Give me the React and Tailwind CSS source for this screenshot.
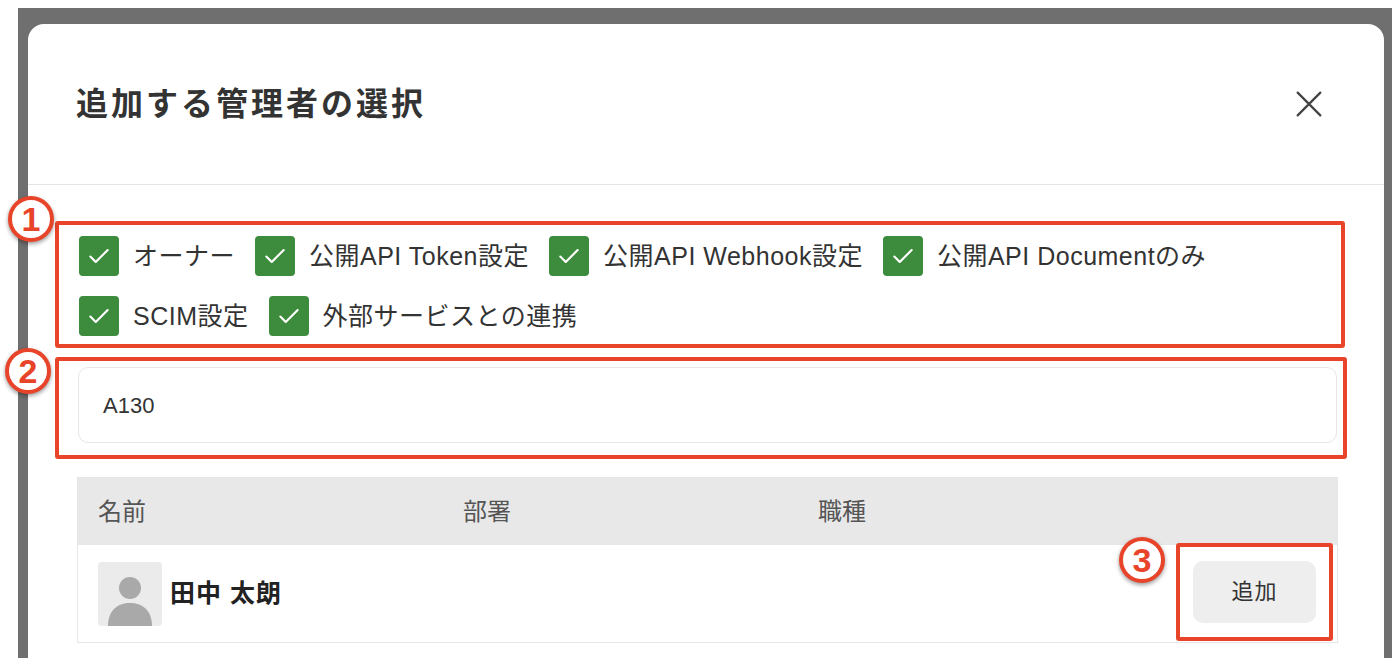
import React from "react";

const font = { fontFamily: '"Liberation Sans", "Noto Sans CJK JP", sans-serif' };

function Check() {
  return (
    <div className="w-10 h-10 rounded-[4px] bg-[#3d8b3d] flex items-center justify-center shrink-0">
      <svg width="26" height="26" viewBox="0 0 24 24" fill="none" stroke="white" strokeWidth="2" strokeLinecap="round" strokeLinejoin="round">
        <path d="M4 12.5l5 5L20 6.5" />
      </svg>
    </div>
  );
}

function Item({ label }) {
  return (
    <div className="flex items-center gap-[14px]">
      <Check />
      <span className="text-[25px] text-[#333] leading-none tracking-[0.5px]">{label}</span>
    </div>
  );
}

function Badge({ n, className }) {
  return (
    <div className={"absolute w-[46px] h-[46px] rounded-full bg-white border-[4px] border-[#e8442a] flex items-center justify-center shadow-[0_2px_4px_rgba(0,0,0,0.4)] " + className}>
      <span className="text-[34px] font-black text-[#e8442a] leading-none" style={{ fontFamily: '"Liberation Sans", sans-serif' }}>{n}</span>
    </div>
  );
}

export default function App() {
  return (
    <div className="w-[1394px] h-[664px] bg-white relative overflow-hidden" style={font}>
      <div className="absolute left-[18px] top-[8px] w-[1374px] h-[650px] bg-[#6f6f6f]">
        <div className="absolute left-[10px] top-[16px] right-[8px] bottom-0 bg-white rounded-tl-[16px] rounded-tr-[16px]">
          <div className="h-[161px] flex items-center justify-between pl-[48px] pr-[58px] border-b border-[#e5e5e5]">
            <h1 className="text-[32px] font-bold text-[#333] tracking-[3px]">追加する管理者の選択</h1>
            <svg width="34" height="34" viewBox="0 0 24 24" fill="none" stroke="#444" strokeWidth="1.6" strokeLinecap="round">
              <path d="M4 4l16 16M20 4L4 20" />
            </svg>
          </div>
          <div className="pl-[27px] pr-[39px] pt-[36px]">
            <div className="border-[4px] border-[#e8442a] rounded-[3px] px-[20px] pt-[11px] pb-[8px] flex flex-col gap-[20px]">
              <div className="flex items-center gap-[20px]">
                <Item label="オーナー" />
                <Item label="公開API Token設定" />
                <Item label="公開API Webhook設定" />
                <Item label="公開API Documentのみ" />
              </div>
              <div className="flex items-center gap-[20px]">
                <Item label="SCIM設定" />
                <Item label="外部サービスとの連携" />
              </div>
            </div>
            <div className="mt-[9px] border-[4px] border-[#e8442a] rounded-[3px] pl-[19px] pr-[6px] pt-[6px] pb-[12px] mr-[-2px]">
              <div className="h-[76px] rounded-[10px] border border-[#e6e6e6] flex items-center px-[24px] text-[22px] text-[#333]">A130</div>
            </div>
            <div className="mt-[18px] ml-[22px] mr-[7px] border border-[#e6e6e6]">
              <div className="h-[67px] bg-[#e8e8e8] flex items-center text-[24px] text-[#555]">
                <div className="w-[385px] pl-[20px]">名前</div>
                <div className="w-[355px]">部署</div>
                <div>職種</div>
              </div>
              <div className="h-[97px] flex items-center justify-between pl-[20px] pr-[20px]">
                <div className="flex items-center gap-[8px]">
                  <div className="w-[64px] h-[64px] rounded-[4px] bg-[#ebebeb] flex items-end justify-center overflow-hidden">
                    <svg width="48" height="56" viewBox="0 0 48 56"><circle cx="24" cy="18" r="11" fill="#a9a9a9" /><path d="M2 56 C2 40 12 33 24 33 C36 33 46 40 46 56Z" fill="#a9a9a9" /></svg>
                  </div>
                  <span className="text-[25px] font-bold text-[#222] tracking-[1px]">田中 太朗</span>
                </div>
                <div className="border-[4px] border-[#e8442a] rounded-[3px] w-[157px] h-[98px] flex items-center justify-center mr-[-16px] mt-[-4px]">
                  <div className="w-[123px] h-[62px] bg-[#eeeeee] rounded-[10px] flex items-center justify-center text-[22px] text-[#333] tracking-[1px]">追加</div>
                </div>
              </div>
            </div>
          </div>
        </div>
      </div>
      <Badge n="1" className="left-[8px] top-[196px]" />
      <Badge n="2" className="left-[5px] top-[348px]" />
      <Badge n="3" className="left-[1119px] top-[537px]" />
    </div>
  );
}
